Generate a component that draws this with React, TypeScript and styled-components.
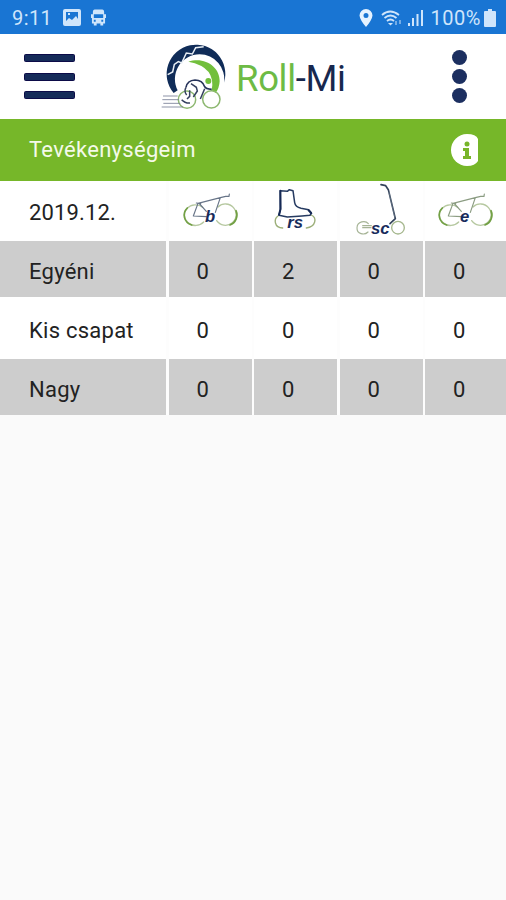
import React from "react";
import styled, { createGlobalStyle } from "styled-components";

const NAVY = "#182c5c";
const GREEN = "#76b729";

const GlobalStyle = createGlobalStyle`
  * { box-sizing: border-box; }
  body { margin: 0; background: #fafafa; }
`;

const Screen = styled.div`
  width: 100%;
  max-width: 506px;
  min-height: 900px;
  background: #fafafa;
  font-family: Roboto, sans-serif;
  color: #222;
  overflow: hidden;
`;

const StatusBar = styled.div`
  height: 34px;
  padding: 1px 10px 0 12px;
  display: flex;
  align-items: center;
  background: #1975d3;
  color: #cfe5fb;
  font-size: 20px;
`;

const Clock = styled.span`
  width: 50px;
  letter-spacing: 0.4px;
`;

const StatusGlyph = styled.svg<{ $gap?: number }>`
  display: block;
  flex: none;
  fill: currentColor;
  margin-left: ${(p) => p.$gap ?? 0}px;
`;

const Spacer = styled.div`
  flex: 1;
`;

const BatteryText = styled.span`
  margin-left: 6px;
  letter-spacing: 0.55px;
`;

const Header = styled.header`
  height: 85px;
  padding: 0 39px 0 24px;
  display: flex;
  align-items: center;
  background: #fff;
`;

const IconButton = styled.button`
  border: 0;
  padding: 0;
  background: none;
  display: flex;
  flex-direction: column;
  flex: none;
`;

const MenuButton = styled(IconButton)`
  width: 51px;
  gap: 10.3px;
`;

const MenuLine = styled.i`
  height: 8px;
  border-radius: 1.5px;
  background: #152b59;
  border: 1px solid #0c0b48;
`;

const MoreButton = styled(IconButton)`
  gap: 4px;
`;

const Dot = styled.i`
  width: 15px;
  height: 15px;
  border-radius: 50%;
  background: #1c2f60;
`;

const Brand = styled.div`
  flex: 1;
  display: flex;
  align-items: center;
  padding-left: 80px;
`;

const BrandMark = styled.svg`
  display: block;
  flex: none;
  width: 80px;
  height: 80px;
  fill: none;
`;

const BrandName = styled.div`
  margin-left: 1px;
  padding-top: 4px;
  font-size: 36.5px;
  line-height: 44px;
  letter-spacing: -0.35px;
  white-space: nowrap;
  color: #17284e;
`;

const BrandGreen = styled.span`
  color: #6dbb45;
`;

const TitleBar = styled.div`
  height: 62px;
  padding: 0 27px 0 29px;
  display: flex;
  align-items: center;
  justify-content: space-between;
  background: ${GREEN};
  color: #f4fae9;
`;

const Title = styled.h1`
  margin: 0 0 2px;
  font-size: 22px;
  font-weight: 400;
  letter-spacing: 0.3px;
`;

const Table = styled.div`
  display: grid;
  grid-template-columns: 166px 83px 83px 83px 1fr;
  grid-template-rows: 60px 56px 62px 56px;
  column-gap: 2.5px;
  background: #fdfdfd;
`;

const Cell = styled.div<{ $shaded?: boolean; $value?: boolean }>`
  padding-left: ${(p) => (p.$value ? 28 : 29)}px;
  padding-top: 5px;
  display: flex;
  align-items: center;
  background: ${(p) => (p.$shaded ? "#cdcdcd" : "#fff")};
  font-size: 22px;
  letter-spacing: ${(p) => (p.$value ? 0 : 0.25)}px;
`;

const DateCell = styled(Cell)`
  padding-top: 3px;
  letter-spacing: 0.15px;
`;

const IconCell = styled.div`
  background: #fff;
  overflow: hidden;
`;

const SportIcon = styled.svg`
  display: block;
  width: 83px;
  height: 60px;
  fill: none;
  stroke-linecap: round;
  stroke-linejoin: round;
`;

const Tag = styled.text`
  font: italic 700 50px "Liberation Sans", sans-serif;
  fill: ${NAVY};
`;

function Logo() {
  return (
    <BrandMark viewBox="0 0 240 240">
      <path d="M56 168A88 88 0 1 1 207 137A74 74 0 0 0 134 52A74 74 0 0 0 68 160Z" fill="#102c58" />
      <path d="M38 113L53 105L58 82L70 74L80 78L94 48L112 51L122 32L146 29" stroke="#e9eff5" strokeWidth="4.5" />
      <path d="M100 74C148 57 196 90 194 133Q193 153 182 168L170 160Q184 90 100 74Z" fill="#72bf3c" />
      <circle cx="160" cy="132" r="9" fill="#72bf3c" />
      <g stroke="#8db870" strokeWidth="4.5">
        <circle cx="96" cy="188" r="26" />
        <circle cx="169" cy="187" r="26" />
      </g>
      <path d="M93 151Q97 130 120 129Q142 129 149 149Q152 156 170 157" stroke="#253259" strokeWidth="5" />
      <path d="M93 151Q86 163 95 174M108 140L124 151L127 162L115 180M104 160V178L96 186M149 155L136 186M80 188Q90 199 105 198" stroke="#34405f" strokeWidth="4.5" />
      <g stroke="#7b8299" strokeWidth="2.6">
        <path d="M24 177H68M22 188H72M25 199H76M20 210H84" />
      </g>
    </BrandMark>
  );
}

function Bike({ letter, offset = 10 }: { letter: string; offset?: number }) {
  const frame = letter === "e" ? "#8b9c82" : "#687588";
  return (
    <SportIcon viewBox={`${offset} 9 249 180`}>
      <g stroke="#b6c8a0" strokeWidth="4">
        <path d="M111 88A33 31 0 1 0 114 132" />
        <path d="M157 87A32 32 0 1 1 153 128" />
      </g>
      <g stroke="#72a044" strokeWidth="5">
        <path d="M65 90A33 31 0 0 0 78 141" />
        <path d="M211 98A32 32 0 0 1 193 141" />
      </g>
      <path d="M83 114L97 76L164 59L149 103M83 114L122 116M102 78L122 100M164 59L180 55H190L191 48M92 75L105 77" stroke={frame} strokeWidth="3.5" />
      <Tag x="118" y="131">{letter}</Tag>
    </SportIcon>
  );
}

function Skate() {
  return (
    <SportIcon viewBox="12 9 249 180">
      <g stroke="#9caf79" strokeWidth="4">
        <path d="M84 114C71 123 72 149 98 150M183 111C202 119 198 146 169 150" />
      </g>
      <path d="M91 38L92 92L87 112L112 117L156 114L180 112L184 104L176 95L153 91Q136 87 134 74L129 38L118 35L112 40Z" stroke="#263b61" strokeWidth="4.5" />
      <path d="M91 38V95L87 110M176 97L184 106" stroke="#152955" strokeWidth="6" />
      <Tag x="112" y="149">rs</Tag>
    </SportIcon>
  );
}

function Scooter() {
  return (
    <SportIcon viewBox="14 9 249 180">
      <path d="M99 137C90 126 66 130 65 149C64 168 87 173 98 162M82 143H108M82 149H107" stroke="#a6b496" strokeWidth="3.5" />
      <circle cx="188" cy="149" r="19" stroke="#a5b78d" strokeWidth="4" />
      <path d="M137 20L151 23L159 35L180 122L164 137" stroke="#34435c" strokeWidth="5" />
      <path d="M161 43L178 116" stroke="#81909b" strokeWidth="1.5" />
      <Tag x="107" y="167">sc</Tag>
    </SportIcon>
  );
}

const rows = [
  { label: "Egyéni", values: [0, 2, 0, 0], shaded: true },
  { label: "Kis csapat", values: [0, 0, 0, 0], shaded: false },
  { label: "Nagy", values: [0, 0, 0, 0], shaded: true },
];

export default function App() {
  return (
    <>
      <GlobalStyle />
      <Screen>
        <StatusBar>
          <Clock>9:11</Clock>
          <StatusGlyph $gap={1} width="18" height="17" viewBox="0 0 18 17">
            <path fillRule="evenodd" d="M2 0H16Q18 0 18 2V15Q18 17 16 17H2Q0 17 0 15V2Q0 0 2 0ZM3 3V12L6 9L9 11L13 7L15 10V3ZM5 4H7V6H5Z" />
          </StatusGlyph>
          <StatusGlyph $gap={10} width="15" height="17" viewBox="0 0 16 17">
            <path fillRule="evenodd" d="M4 0H12Q14 0 14 3V5H16V9H15V15H13V17H10V15H6V17H3V15H1V9H0V5H2V3Q2 0 4 0ZM3 5V9H13V5ZM3 11V13H5V11ZM11 11V13H13V11Z" />
          </StatusGlyph>
          <Spacer />
          <StatusGlyph width="14" height="18" viewBox="0 0 14 18">
            <path fillRule="evenodd" d="M7 0A6.5 6.5 0 0 1 13.5 6.5Q13 11 7 18Q1 11 .5 6.5A6.5 6.5 0 0 1 7 0ZM7 4A2.5 2.5 0 1 0 7 9A2.5 2.5 0 1 0 7 4Z" fill="#e5f2ff" />
          </StatusGlyph>
          <StatusGlyph $gap={8} width="21" height="16" viewBox="0 0 21 16">
            <path d="M1 5Q9-2 18 5M3.5 8Q9.500 3 15.500 8M6 11Q9.500 8 13 11" fill="none" stroke="currentColor" strokeWidth="1.8" />
            <path d="M7 13H12L9.500 15.500Z" />
            <path d="M14 11H16V15H14ZM18 10H20V14H18Z" opacity=".5" />
          </StatusGlyph>
          <StatusGlyph $gap={5} width="17" height="17" viewBox="0 0 17 17">
            <path d="M1 14H3V17H1ZM5 9H7V17H5ZM9.500 5H11.500V17H9.500ZM14 1H16V17H14Z" />
          </StatusGlyph>
          <BatteryText>100%</BatteryText>
          <StatusGlyph $gap={3} width="12" height="18" viewBox="0 0 12 18">
            <path d="M4 0H8V2H11Q12 2 12 3V17Q12 18 11 18H1Q0 18 0 17V3Q0 2 1 2H4Z" />
          </StatusGlyph>
        </StatusBar>

        <Header>
          <MenuButton aria-label="Menu">
            <MenuLine />
            <MenuLine />
            <MenuLine />
          </MenuButton>
          <Brand>
            <Logo />
            <BrandName>
              <BrandGreen>Roll</BrandGreen>-Mi
            </BrandName>
          </Brand>
          <MoreButton aria-label="More">
            <Dot />
            <Dot />
            <Dot />
          </MoreButton>
        </Header>

        <TitleBar>
          <Title>Tevékenységeim</Title>
          <svg width="28" height="32" viewBox="0 0 28 32">
            <path d="M16 0Q25 0 27 5V27Q24 32 16 32A16 16 0 0 1 16 0Z" fill="#fff" />
            <path d="M12 14H18V22H20V25H12V22H14V17H12Z" fill="#78b52b" />
            <circle cx="16" cy="10" r="2.500" fill="#78b52b" />
          </svg>
        </TitleBar>

        <Table>
          <DateCell>2019.12.</DateCell>
          <IconCell><Bike letter="b" /></IconCell>
          <IconCell><Skate /></IconCell>
          <IconCell><Scooter /></IconCell>
          <IconCell><Bike letter="e" offset={13} /></IconCell>
          {rows.map((row) => (
            <React.Fragment key={row.label}>
              <Cell $shaded={row.shaded}>{row.label}</Cell>
              {row.values.map((value, i) => (
                <Cell key={i} $shaded={row.shaded} $value>{value}</Cell>
              ))}
            </React.Fragment>
          ))}
        </Table>
      </Screen>
    </>
  );
}
